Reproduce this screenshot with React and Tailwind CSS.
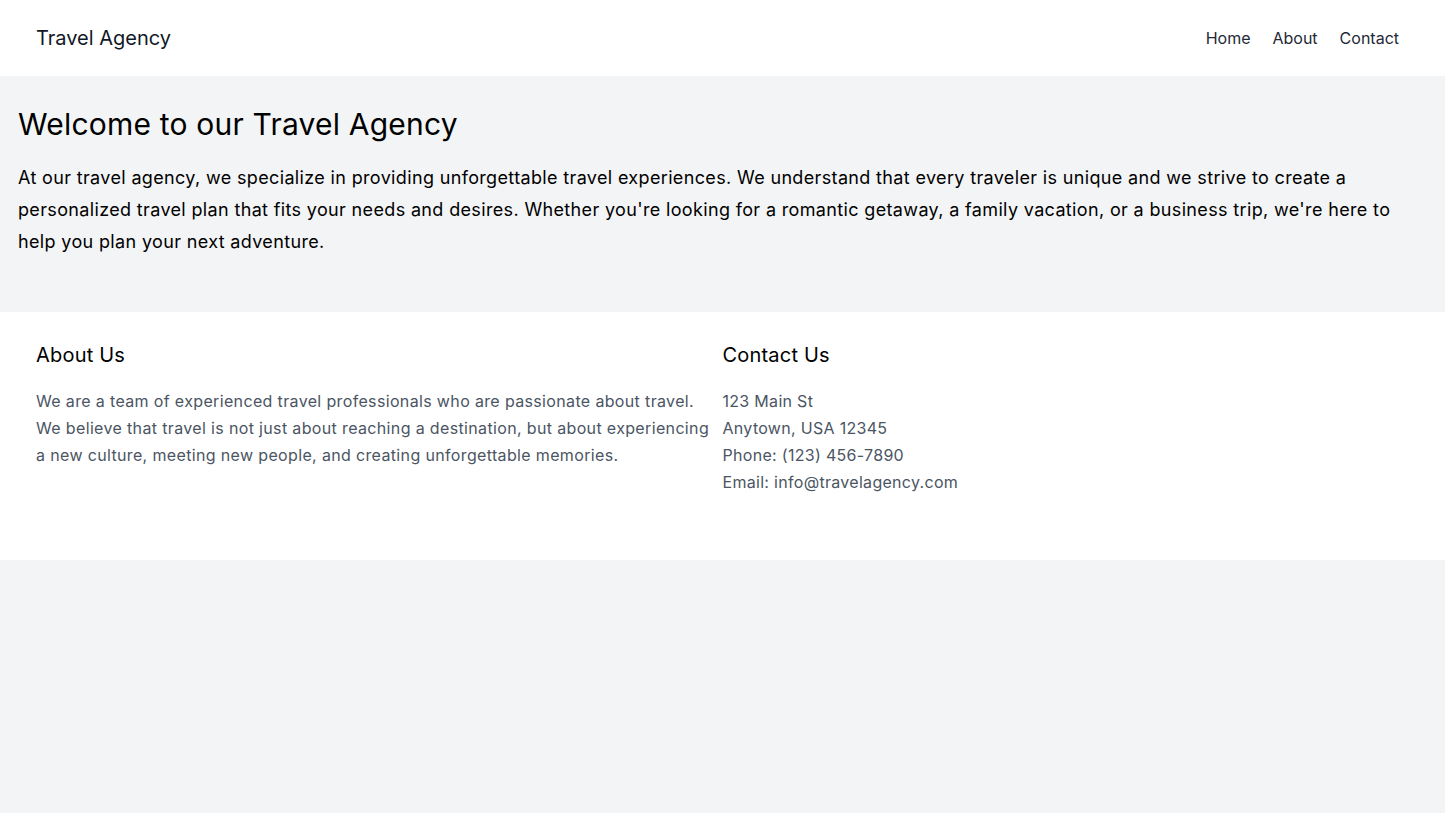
export default function App() {
  return (
    <div className="min-h-screen bg-[#f3f4f6] text-black tracking-[0.35px]" style={{ fontFamily: 'Inter, sans-serif' }}>
      <header className="bg-white h-[76px] flex items-center justify-between pl-9 pr-[46px]">
        <div className="text-xl text-[#111827] tracking-normal">Travel Agency</div>
        <nav className="flex gap-[22px] text-base text-[#1f2937] tracking-normal">
          <a>Home</a>
          <a>About</a>
          <a>Contact</a>
        </nav>
      </header>
      <section className="px-[18px] pt-[30px] pb-[54px]">
        <h1 className="text-3xl mb-[20px] tracking-[0.2px]">Welcome to our Travel Agency</h1>
        <p className="text-lg leading-8">
          At our travel agency, we specialize in providing unforgettable travel experiences. We understand that every traveler is unique and we strive to create a personalized travel plan that fits your needs and desires. Whether you're looking for a romantic getaway, a family vacation, or a business trip, we're here to help you plan your next adventure.
        </p>
      </section>
      <footer className="bg-white px-9 pt-[29px] pb-[64px]">
        <div className="grid grid-cols-2">
          <div>
            <h2 className="text-xl mb-[19px] tracking-[0.2px]">About Us</h2>
            <p className="text-base leading-[27px] text-[#4b5563]">
              We are a team of experienced travel professionals who are passionate about travel. We believe that travel is not just about reaching a destination, but about experiencing a new culture, meeting new people, and creating unforgettable memories.
            </p>
          </div>
          <div>
            <h2 className="text-xl mb-[19px] tracking-[0.2px]">Contact Us</h2>
            <p className="text-base leading-[27px] text-[#4b5563] tracking-[0.3px]">
              123 Main St<br />
              Anytown, USA 12345<br />
              Phone: (123) 456-7890<br />
              Email: info@travelagency.com
            </p>
          </div>
        </div>
      </footer>
    </div>
  );
}
